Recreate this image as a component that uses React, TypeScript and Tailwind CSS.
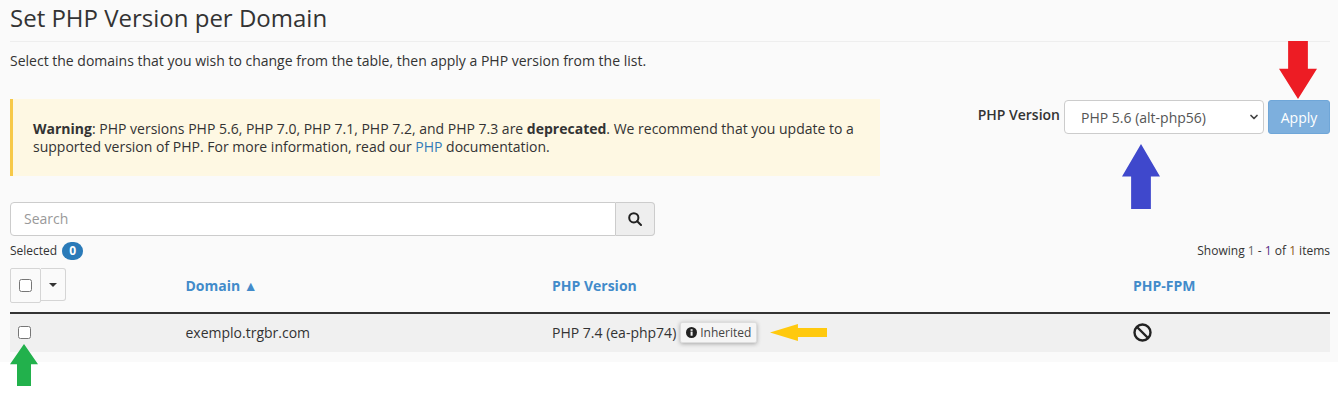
import React from "react";
import { ChevronDown } from "lucide-react";

function Arrow({ className, points, fill }: { className: string; points: string; fill: string }) {
  return (
    <svg className={className} viewBox="0 0 100 100" preserveAspectRatio="none">
      <polygon points={points} fill={fill} />
    </svg>
  );
}

export default function App() {
  return (
    <div className="relative w-[1338px] h-[408px] overflow-hidden bg-white font-['Open_Sans',sans-serif] text-[#333]">
      <div className="h-[362px] bg-[#fafafa] pl-[10px] pr-[8px]">
        <h1 className="h-[42px] border-b border-[#eeeeee] text-[24px] leading-[35px] text-[#333] font-normal">
          Set PHP Version per Domain
        </h1>
        <p className="mt-[9px] text-[14px] leading-[20px]">
          Select the domains that you wish to change from the table, then apply a PHP version from the list.
        </p>

        <div className="mt-[28px] flex justify-between items-start">
          <div className="w-[870px] h-[77px] border-l-[3px] border-[#f7c948] bg-[#fef8e3] pl-[20px] pr-[20px] pt-[21px] text-[14px] leading-[18px]">
            <strong>Warning</strong>: PHP versions PHP 5.6, PHP 7.0, PHP 7.1, PHP 7.2, and PHP 7.3 are{" "}
            <strong>deprecated</strong>. We recommend that you update to a supported version of PHP. For more information, read our{" "}
            <a className="text-[#337ab7]">PHP</a> documentation.
          </div>

          <div className="flex items-start">
            <span className="mt-[6px] mr-[4px] text-[14px] leading-[20px] font-semibold">PHP Version</span>
            <div className="relative w-[200px] h-[34px] mt-[1px] mr-[4px] rounded-[4px] border border-[#cccccc] bg-white pl-[16px] text-[14px] leading-[34px] text-[#555]">
              PHP 5.6 (alt-php56)
              <ChevronDown className="absolute right-[3px] top-[10px] w-[12px] h-[12px] text-[#444]" strokeWidth={3.5} />
            </div>
            <button className="w-[62px] h-[34px] mt-[1px] rounded-[3px] border border-[#6fa6d8] bg-[#7dafdd] text-[14px] text-white">
              Apply
            </button>
          </div>
        </div>

        <div className="mt-[26px] flex w-[645px] h-[34px]">
          <div className="flex-1 rounded-l-[4px] border border-[#cccccc] bg-white pl-[13px] text-[14px] leading-[31px] text-[#999]">
            Search
          </div>
          <div className="flex w-[39px] items-center justify-center rounded-r-[4px] border border-l-0 border-[#cccccc] bg-[#eeeeee]">
            <svg className="w-[14px] h-[14px]" viewBox="0 0 14 14" fill="none" stroke="#222" strokeWidth="2">
              <circle cx="5.8" cy="5.8" r="4.6" />
              <path d="M9.2 9.2 13 13" strokeLinecap="round" />
            </svg>
          </div>
        </div>

        <div className="mt-[4px] flex h-[22px] items-center justify-between text-[12px]">
          <div className="flex items-center gap-[5px]">
            <span>Selected</span>
            <span className="flex h-[18px] w-[21px] items-center justify-center rounded-full bg-[#2a7ab8] text-[12px] font-bold text-white">
              0
            </span>
          </div>
          <span className="text-[12px]">
            Showing <span className="text-[#666]">1</span> - <span className="text-[#5b2a86]">1</span> of{" "}
            <span className="text-[#8a5a20]">1</span> items
          </span>
        </div>

        <div className="mt-[6px] flex h-[46px] border-b-[2px] border-[#333] text-[14px] font-bold text-[#428bca]">
          <div className="w-[175.5px] flex items-start">
            <div className="flex h-[35px] w-[31px] items-center justify-center rounded-[2px] border border-[#d5d5d5]">
              <input type="checkbox" readOnly className="h-[13px] w-[13px]" />
            </div>
            <div className="flex h-[33px] w-[25px] items-center justify-center rounded-r-[3px] border border-l-0 border-[#d5d5d5]">
              <span className="h-0 w-0 border-x-[4px] border-t-[4px] border-x-transparent border-t-[#333]" />
            </div>
          </div>
          <div className="w-[366.5px] pt-[8px] leading-[20px]">Domain ▲</div>
          <div className="w-[581px] pt-[8px] leading-[20px]">PHP Version</div>
          <div className="pt-[8px] leading-[20px]">PHP-FPM</div>
        </div>

        <div className="flex h-[38px] items-center bg-[#f0f0f0] pb-[1px] text-[14px]">
          <div className="w-[175.5px] pl-[8px]">
            <input type="checkbox" readOnly className="block h-[13px] w-[13px]" />
          </div>
          <div className="w-[366.5px]">exemplo.trgbr.com</div>
          <div className="flex w-[581px] items-center">
            <span>PHP 7.4 (ea-php74)</span>
            <span className="ml-[4px] flex h-[21px] items-center gap-[3px] rounded-[2px] border border-[#dddddd] bg-[#f5f5f5] px-[5px] text-[12px] text-[#444] shadow-[0_1px_4px_rgba(0,0,0,0.3)]">
              <svg className="h-[11px] w-[11px]" viewBox="0 0 12 12">
                <circle cx="6" cy="6" r="6" fill="#222" />
                <rect x="5" y="5" width="2.2" height="4.5" fill="#f5f5f5" />
                <rect x="5" y="2.4" width="2.2" height="1.8" fill="#f5f5f5" />
              </svg>
              Inherited
            </span>
          </div>
          <svg className="h-[19px] w-[19px]" viewBox="0 0 19 19" fill="none" stroke="#222" strokeWidth="2.4">
            <circle cx="9.5" cy="9.5" r="8" />
            <path d="M4 4 15 15" />
          </svg>
        </div>
      </div>

      <Arrow className="absolute left-[1279px] top-[41px] w-[38px] h-[58px]" fill="#ed1c24" points="24,0 76,0 76,48 100,48 50,100 0,48 24,48" />
      <Arrow className="absolute left-[1122px] top-[144px] w-[38px] h-[65px]" fill="#3f48cc" points="50,0 100,50 76,50 76,100 24,100 24,50 0,50" />
      <Arrow className="absolute left-[10px] top-[344px] w-[28px] h-[42px]" fill="#22b14c" points="50,0 100,48 75,48 75,100 25,100 25,48 0,48" />
      <Arrow className="absolute left-[770px] top-[324px] w-[57px] h-[17px]" fill="#ffc90e" points="0,50 49,0 49,24 100,24 100,76 49,76 49,100" />
    </div>
  );
}
